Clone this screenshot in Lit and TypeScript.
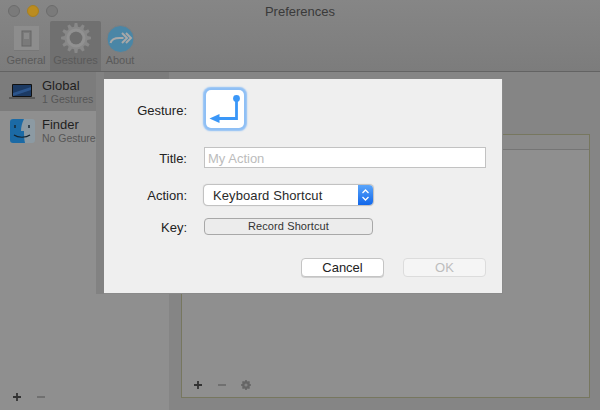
import { LitElement, html, css, svg } from "lit";
import { customElement } from "lit/decorators.js";

const gearPath = (cx: number, cy: number, r: number, R: number, n: number) => {
  let d = "";
  for (let i = 0; i < n; i++) {
    const a = (i / n) * Math.PI * 2;
    const w = (Math.PI / n) * 0.5;
    const pts = [
      [r, a - w * 1.3],
      [R, a - w * 0.7],
      [R, a + w * 0.7],
      [r, a + w * 1.3],
    ];
    for (const [rad, t] of pts) {
      const x = cx + rad * Math.sin(t);
      const y = cy - rad * Math.cos(t);
      d += (d ? "L" : "M") + x.toFixed(2) + " " + y.toFixed(2);
    }
  }
  return d + "Z";
};

@customElement("app-root")
export class AppRoot extends LitElement {
  static styles = css`
    :host {
      display: block;
      width: 600px;
      height: 410px;
      position: relative;
      overflow: hidden;
      font-family: "Liberation Sans", Arial, sans-serif;
      background: #8f8f8f;
    }
    .win { display: flex; flex-direction: column; height: 410px; }
    .top {
      height: 71px;
      flex: none;
      background: linear-gradient(#868686, #7c7c7c);
      border-bottom: 1px solid #636363;
      box-sizing: content-box;
      display: flex;
      flex-direction: column;
    }
    .titlebar {
      height: 21px;
      flex: none;
      display: flex;
      align-items: center;
      padding-left: 8px;
      gap: 7px;
      position: relative;
    }
    .dot { width: 10px; height: 10px; border-radius: 50%; background: #7a7a7a; border: 1px solid #6c6c6c; }
    .dot.y { background: #bb8c20; border-color: #a9801f; }
    .title {
      position: absolute; left: 0; right: 0; top: 4px; text-align: center;
      font-size: 13px; line-height: 15px; color: #3a3a3a;
    }
    .tabs { display: flex; flex: 1; padding-left: 5px; }
    .tab {
      display: flex; flex-direction: column; align-items: center;
      font-size: 11px; line-height: 13px; color: #5a5a5a; padding-top: 2px;
      box-sizing: border-box;
    }
    .tab svg { display: block; width: 32px; height: 32px; }
    .tab span { margin-top: -1px; }
    .t1 { width: 42px; }
    .t2 { width: 51px; margin-left: 3px; background: #707070; border-radius: 2px 2px 0 0; }
    .t3 { width: 32px; margin-left: 3px; }
    .main { flex: 1; display: flex; min-height: 0; }
    .side {
      width: 169px; flex: none; background: #8f8f8f; position: relative;
      border-right: 0; display: flex; flex-direction: column;
    }
    .row { height: 39px; display: flex; padding-left: 9px; gap: 7px; align-items: center; box-sizing: border-box; }
    .row.sel { background: #7c7c7c; }
    .row svg { width: 26px; height: 26px; flex: none; }
    .row b { display: block; font-weight: normal; font-size: 13px; line-height: 15px; color: #1f1f1f; }
    .row i { display: block; font-style: normal; font-size: 10.5px; line-height: 13px; color: #565656; white-space: nowrap; }
    .mini { display: flex; align-items: center; }
    .sb { margin-top: auto; padding: 0 0 7px 11px; gap: 12px; }
    .mini svg { display: block; width: 12px; height: 12px; }
    .content { flex: 1; background: #858585; padding: 62px 10px 12px 11px; display: flex; }
    .panel {
      flex: 1; border: 1px solid #77775f; background: #8f8f8f;
      display: flex; flex-direction: column; margin-left: 1px;
    }
    .phead { height: 14px; border-bottom: 1px solid #757575; background: #8a8a8a; flex: none; }
    .pb { margin-top: auto; padding: 0 0 6px 10px; gap: 12px; }
    .shade {
      position: absolute; left: 96px; top: 72px; width: 8px; height: 222px; background: #828282;
    }
    .sheet {
      position: absolute; left: 104px; top: 79px; width: 399px; height: 215px;
      background: #efefef; box-sizing: border-box;
      display: grid; grid-template-columns: 83px 282px; column-gap: 17px;
      align-content: start; font-size: 13px; color: #222;
      box-shadow: -1px -1px 0 0 #8a8a8a inset;
    }
    .lab { text-align: right; align-self: center; line-height: 15px; }
    .gesture {
      width: 38px; height: 38px; margin: 2px;
      background: #fff; border-radius: 5px; box-shadow: 0 0 1.5px 2.5px #8ebff5;
      display: block;
    }
    .c-g { margin-top: 9px; height: 44px; }
    .l-g { margin-top: 9px; }
    .r2 { margin-top: 15px; }
    .lab.r2, .lab.r4 { padding-top: 2px; }
    .input {
      height: 21px; box-sizing: border-box; background: #fff; border: 1px solid #c2c2c2;
      color: #bcbcbc; font-size: 13px; line-height: 21px; padding-left: 3px;
    }
    .r3 { margin-top: 17px; }
    .select {
      width: 169px; height: 20px; box-sizing: border-box; background: #fff; border-radius: 4px;
      box-shadow: 0 0 1px 0.5px #bdbdbd; display: flex; align-items: center; justify-content: space-between;
      padding-left: 9px; font-size: 13px; letter-spacing: 0.1px; color: #2a2a2a; overflow: hidden;
    }
    .stepper {
      width: 15px; height: 20px; background: linear-gradient(#5aa5fb, #1167ea); display: flex; align-items: center; justify-content: center;
    }
    .stepper svg { width: 9px; height: 14px; display: block; }
    .r4 { margin-top: 13px; }
    .record {
      width: 169px; height: 17px; box-sizing: border-box; background: #ececec; border: 1px solid #a8a8a8;
      border-radius: 4px; font-size: 11px; line-height: 15px; text-align: center; color: #333; letter-spacing: 0.1px;
    }
    .btns { grid-column: 1 / 3; display: flex; justify-content: flex-end; gap: 19px; margin-top: 23px; }
    .btn {
      width: 83px; height: 19px; box-sizing: border-box; border-radius: 4px; text-align: center;
      font-size: 13px; line-height: 18px; background: #fff; border: 1px solid #c4c4c4; color: #222;
      box-shadow: 0 1px 0 #d0d0d0;
    }
    .btn.off { background: #f5f5f5; border-color: #dcdcdc; color: #bdbdbd; box-shadow: none; }
  `;

  plus() {
    return html`<svg viewBox="0 0 12 12"><path d="M6 2v8M2 6h8" stroke="#333" stroke-width="1.8" fill="none"/></svg>`;
  }
  minus() {
    return html`<svg viewBox="0 0 12 12"><path d="M2 6h8" stroke="#666" stroke-width="1.5" fill="none"/></svg>`;
  }

  render() {
    return html`
      <div class="win">
        <div class="top">
          <div class="titlebar">
            <div class="dot"></div><div class="dot y"></div><div class="dot"></div>
            <div class="title">Preferences</div>
          </div>
          <div class="tabs">
            <div class="tab t1">
              <svg viewBox="0 0 32 32">
                <rect x="4" y="3" width="25" height="25" fill="#8d8d8d"/>
                <rect x="4" y="27" width="25" height="1" fill="#777"/>
                <rect x="12" y="8" width="9" height="15" fill="#7a7a7a" stroke="#666"/>
                <rect x="14" y="10" width="5" height="6" fill="#8a8a8a"/>
              </svg>
              <span>General</span>
            </div>
            <div class="tab t2">
              <svg viewBox="0 0 32 32">
                <path d="${gearPath(16, 15, 11.5, 15, 12)}" fill="#888"/>
                <circle cx="16" cy="15" r="8" fill="none" stroke="#919191" stroke-width="3"/>
                <circle cx="16" cy="15" r="6.3" fill="#6e6e6e"/>
              </svg>
              <span>Gestures</span>
            </div>
            <div class="tab t3">
              <svg viewBox="0 0 32 32">
                <circle cx="16.500" cy="16" r="13.500" fill="#4a86a6" stroke="#7f7f7f"/>
                <path d="M6.500 20c1-4 4-5 9-5h4" fill="none" stroke="#a8a8a8" stroke-width="2"/>
                <path d="M18 10l5 5-5 5M22 10l5 5-5 5" fill="none" stroke="#a8a8a8" stroke-width="2"/>
              </svg>
              <span>About</span>
            </div>
          </div>
        </div>
        <div class="main">
          <div class="side">
            <div class="row sel">
              <svg viewBox="0 0 26 26">
                <rect x="3" y="5" width="20" height="13" rx="1" fill="#111"/>
                <rect x="4" y="6" width="18" height="11" fill="#1c3a63"/>
                <path d="M4 14 22 8v3L4 17z" fill="#2c558c"/>
                <rect x="0" y="18" width="26" height="2" fill="#5a5a5a"/>
              </svg>
              <div><b>Global</b><i>1 Gestures</i></div>
            </div>
            <div class="row">
              <svg viewBox="0 0 26 26">
                <rect x="1" y="1" width="25" height="24" rx="3" fill="#8c9aa3"/>
                <path d="M4 1h11c-2 4-3 8-3 12h3c0 4 0 8 1 12H4a3 3 0 0 1-3-3V4a3 3 0 0 1 3-3z" fill="#1b6aa5"/>
                <path d="M6 7v3M20 7v3" stroke="#14242f" stroke-width="1.4"/>
                <path d="M5 17c4 3 12 3 16 0" fill="none" stroke="#14242f" stroke-width="1.2"/>
              </svg>
              <div><b>Finder</b><i>No Gestures</i></div>
            </div>
            <div class="mini sb">${this.plus()}${this.minus()}</div>
          </div>
          <div class="content">
            <div class="panel">
              <div class="phead"></div>
              <div class="mini pb">
                ${this.plus()}${this.minus()}
                <svg viewBox="0 0 12 12"><path d="${gearPath(6, 6, 4, 5, 8)}" fill="#666"/><circle cx="6" cy="6" r="1.6" fill="#858585"/></svg>
              </div>
            </div>
          </div>
        </div>
      </div>
      <div class="shade"></div>
      <div class="sheet">
        <div class="lab l-g">Gesture:</div>
        <div class="c-g">
          <svg class="gesture" viewBox="0 0 38 38">
            ${svg`<path d="M30.500 9V28.500H12" fill="none" stroke="#3a97f8" stroke-width="2.800"/>
            <circle cx="30.500" cy="8.500" r="3.400" fill="#3a97f8"/>
            <path d="M3.500 28.500 13.500 24V33Z" fill="#3a97f8"/>`}
          </svg>
        </div>
        <div class="lab r2">Title:</div>
        <div class="input r2">My Action</div>
        <div class="lab r3">Action:</div>
        <div class="select r3">
          <span>Keyboard Shortcut</span>
          <div class="stepper">
            <svg viewBox="0 0 9 14"><path d="M1.500 5 4.500 2 7.500 5M1.500 9 4.500 12 7.500 9" fill="none" stroke="#fff" stroke-width="1.300"/></svg>
          </div>
        </div>
        <div class="lab r4">Key:</div>
        <div class="record r4">Record Shortcut</div>
        <div class="btns">
          <div class="btn">Cancel</div>
          <div class="btn off">OK</div>
        </div>
      </div>
    `;
  }
}
